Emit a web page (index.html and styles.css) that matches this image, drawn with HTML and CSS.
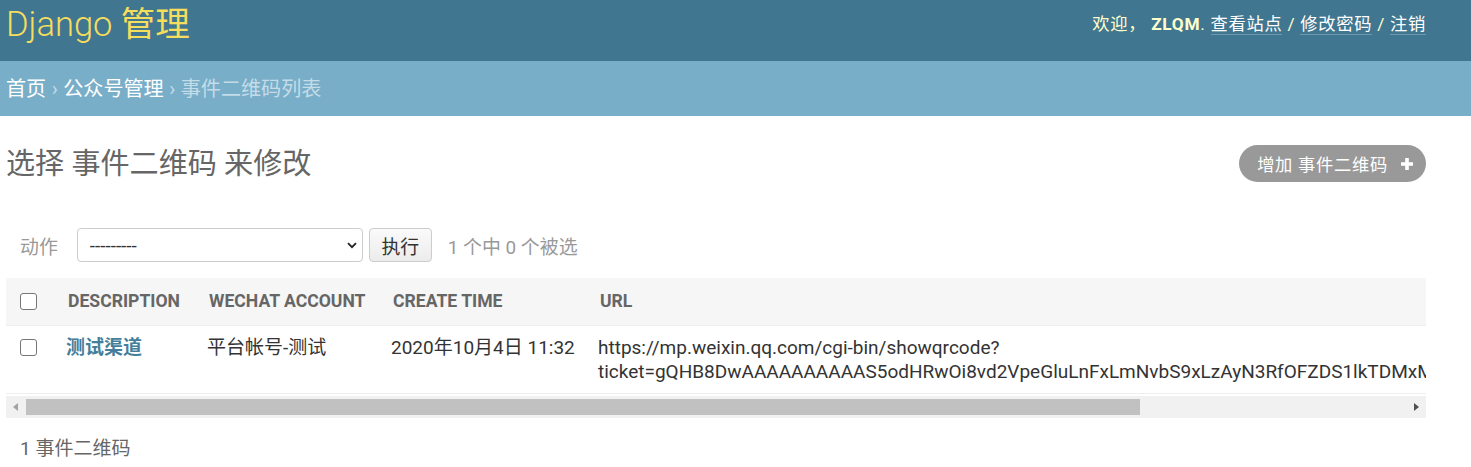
FILE: index.html
```html
<!DOCTYPE html>
<html lang="zh-hans">
<head>
<meta charset="utf-8">
<title>事件二维码列表</title>
<link rel="stylesheet" href="styles.css">
</head>
<body>
<div class="header">
  <h1 class="site-name">Django <span class="cjk">管理</span></h1>
  <div class="user-tools">欢迎， <strong>ZLQM</strong>. <a href="#">查看站点</a> / <a href="#">修改密码</a> / <a href="#">注销</a></div>
</div>
<div class="breadcrumbs"><a href="#">首页</a><span class="sep">›</span><a href="#">公众号管理</a><span class="sep">›</span>事件二维码列表</div>
<div class="content">
  <div class="content-head">
    <h1 class="page-title">选择 事件二维码 来修改</h1>
    <a class="addlink" href="#">增加 事件二维码
      <svg class="plus" width="14" height="14" viewBox="0 0 14 14"><path d="M7 1v12M1 7h12" stroke="#fff" stroke-width="3.6"/></svg>
    </a>
  </div>
  <div class="actions">
    <label class="actions-label">动作</label>
    <div class="select-wrap">
      <select class="action-select"><option>---------</option></select>
      <svg class="chev" width="10" height="7" viewBox="0 0 10 7"><path d="M1 1.2l4 4 4-4" fill="none" stroke="#222" stroke-width="1.8"/></svg>
    </div>
    <button class="go">执行</button>
    <span class="counter">1 个中 0 个被选</span>
  </div>
  <div class="results">
    <table class="result-list">
      <colgroup><col class="c1"><col class="c2"><col class="c3"><col class="c4"><col class="c5"></colgroup>
      <thead>
        <tr>
          <th class="cb"><input type="checkbox" class="chk"></th>
          <th>DESCRIPTION</th>
          <th>WECHAT ACCOUNT</th>
          <th>CREATE TIME</th>
          <th>URL</th>
        </tr>
      </thead>
      <tbody>
        <tr>
          <td class="cb"><input type="checkbox" class="chk"></td>
          <th class="field"><a href="#">测试渠道</a></th>
          <td>平台帐号-测试</td>
          <td>2020年10月4日 11:32</td>
          <td class="url">https://mp.weixin.qq.com/cgi-bin/showqrcode?<br>ticket=gQHB8DwAAAAAAAAAAS5odHRwOi8vd2VpeGluLnFxLmNvbS9xLzAyN3RfOFZDS1lkTDMxMDAwMGcwN2wAAgS</td>
        </tr>
      </tbody>
    </table>
  </div>
  <div class="hscroll">
    <div class="sb-btn"><svg width="6" height="8" viewBox="0 0 6 8"><path d="M5 0v8L0 4z" fill="#a3a3a3"/></svg></div>
    <div class="sb-thumb"></div>
    <div class="sb-track"></div>
    <div class="sb-btn"><svg width="6" height="8" viewBox="0 0 6 8"><path d="M1 0v8l5-4z" fill="#505050"/></svg></div>
  </div>
  <p class="paginator">1 事件二维码</p>
</div>
</body>
</html>
```
FILE: styles.css
```css
body {
  margin: 0;
  font-family: Roboto, "Noto Sans CJK SC", sans-serif;
  color: #333;
  background: #fff;
}

a { text-decoration: none; }

.header {
  height: 61px;
  box-sizing: border-box;
  background: #417690;
  display: flex;
  justify-content: space-between;
  align-items: flex-start;
  padding: 0 45px 0 6px;
}

.site-name {
  margin: 0;
  padding-top: 4px;
  font-size: 34.5px;
  line-height: 40px;
  font-weight: 300;
  color: #f5dd5d;
}

.site-name .cjk { font-weight: 400; }

.user-tools {
  padding-top: 12px;
  font-size: 17.3px;
  line-height: 24px;
  letter-spacing: 0.7px;
  color: #ffc;
}

.user-tools strong { font-weight: 700; }

.user-tools a {
  color: #fff;
  border-bottom: 1px solid rgba(255, 255, 255, 0.25);
}

.breadcrumbs {
  height: 55px;
  box-sizing: border-box;
  background: #79aec8;
  display: flex;
  align-items: center;
  padding: 0 6px;
  font-size: 20.1px;
  line-height: 28px;
  color: #c4dce8;
}

.breadcrumbs a { color: #fff; }

.breadcrumbs .sep { margin: 0 5.5px; }

.content {
  padding: 0 45px 0 6px;
}

.content-head {
  margin-top: 29px;
  height: 37px;
  display: flex;
  justify-content: space-between;
  align-items: center;
}

.page-title {
  margin: 0;
  font-size: 29.1px;
  line-height: 36px;
  font-weight: 400;
  color: #666;
}

.addlink {
  height: 37px;
  box-sizing: border-box;
  padding: 0 12px 0 18px;
  border-radius: 19px;
  background: #999;
  color: #fff;
  font-size: 17.3px;
  letter-spacing: 0.7px;
  display: flex;
  align-items: center;
  gap: 12px;
}

.actions {
  margin-top: 32px;
  padding: 14px;
  display: flex;
  align-items: center;
  color: #999;
  font-size: 18.9px;
  height: 34px;
}

.actions-label { margin-right: 19px; }

.select-wrap {
  position: relative;
  width: 286px;
  height: 34px;
}

.action-select {
  appearance: none;
  -webkit-appearance: none;
  width: 100%;
  height: 34px;
  border: 1px solid #ccc;
  border-radius: 4px;
  background: #fff;
  padding: 0 12px;
  font-family: Roboto, sans-serif;
  font-size: 18.9px;
  color: #333;
}

.chev {
  position: absolute;
  right: 6px;
  top: 14px;
}

.go {
  margin-left: 6px;
  width: 63px;
  height: 34px;
  border: 1px solid #ccc;
  border-radius: 4px;
  background: linear-gradient(#fafafa, #ececec);
  font-family: Roboto, "Noto Sans CJK SC", sans-serif;
  font-size: 18.9px;
  color: #333;
}

.counter { margin-left: 16px; }

.results {
  margin-top: 2px;
  overflow: hidden;
}

.result-list {
  width: 1760px;
  table-layout: fixed;
  border-collapse: collapse;
}

.c1 { width: 46px; }
.c2 { width: 141px; }
.c3 { width: 184px; }
.c4 { width: 207px; }

.result-list thead th {
  height: 47px;
  box-sizing: border-box;
  background: #f6f6f6;
  border-bottom: 1px solid #eee;
  text-align: left;
  padding: 0 16px;
  font-size: 17.6px;
  font-weight: 700;
  color: #666;
  white-space: nowrap;
}

.result-list thead th.cb,
.result-list tbody td.cb { padding: 0 14px; }

.result-list tbody td,
.result-list tbody th {
  padding: 10px 14px 9px;
  vertical-align: top;
  text-align: left;
  font-size: 19px;
  line-height: 24px;
  font-weight: 400;
  color: #333;
  border-bottom: 1px solid #eee;
  white-space: nowrap;
}

.result-list tbody th.field a {
  color: #447e9b;
  font-weight: 700;
}

.chk {
  appearance: none;
  -webkit-appearance: none;
  margin: 0;
  width: 17px;
  height: 17px;
  border: 1px solid #767676;
  border-radius: 3px;
  background: #fff;
  display: block;
}

.result-list tbody td.cb { padding-top: 13px; }

.hscroll {
  margin-top: 2px;
  height: 22px;
  display: flex;
  background: #f1f1f1;
}

.sb-btn {
  width: 20px;
  display: flex;
  align-items: center;
  justify-content: center;
}

.sb-thumb {
  width: 1114px;
  margin: 3px 0;
  background: #c1c1c1;
}

.sb-track { flex: 1; }

.paginator {
  margin: 15px 0 0;
  padding-left: 14px;
  font-size: 19px;
  line-height: 31px;
  color: #666;
}
```
